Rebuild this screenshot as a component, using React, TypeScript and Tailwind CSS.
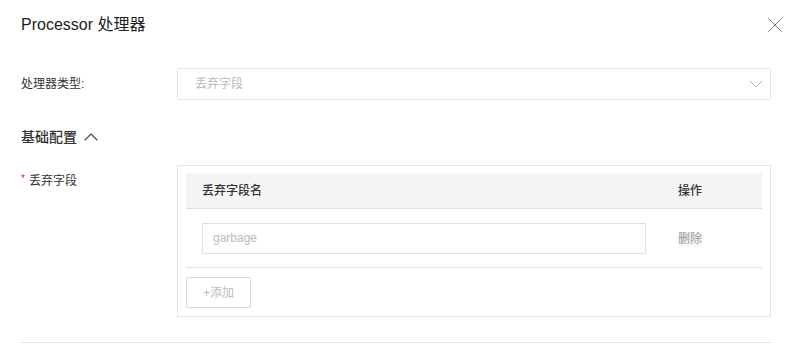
import { X, ChevronDown, ChevronUp } from 'lucide-react';

export default function App() {
  return (
    <div
      className="w-[794px] h-[358px] bg-white text-[#333] overflow-hidden"
      style={{ fontFamily: '"Liberation Sans", "Noto Sans CJK SC", sans-serif' }}
    >
      <div className="h-[50px] flex items-center justify-between pl-[21px] pr-[6px]">
        <h1 className="text-[16px] leading-[20px] text-[#222]">Processor 处理器</h1>
        <X className="w-[26px] h-[26px] text-[#777]" strokeWidth={0.9} />
      </div>

      <div className="pl-[21px] pr-[23px]">
        <div className="mt-[18px] flex items-center">
          <label className="w-[156px] text-[12px] leading-[18px]">处理器类型:</label>
          <div className="flex-1 h-[32px] border border-[#e3e3e3] rounded-[2px] flex items-center justify-between pl-[17px] pr-[2px]">
            <span className="text-[12px] text-[#bbb]">丢弃字段</span>
            <ChevronDown className="w-[24px] h-[24px] text-[#aaa]" strokeWidth={0.9} />
          </div>
        </div>

        <div className="mt-[27px] flex items-center gap-[2px] h-[20px]">
          <span className="text-[14px] font-medium text-[#333]">基础配置</span>
          <ChevronUp className="w-[24px] h-[24px] text-[#444]" strokeWidth={1.1} />
        </div>

        <div className="mt-[18px] flex">
          <div className="w-[156px] pt-[7px] text-[12px] leading-[18px] flex items-start">
            <span className="text-[#e23] mr-[4px] text-[10px] leading-[14px]">*</span>
            丢弃字段
          </div>
          <div className="flex-1 border border-[#e3e3e3] pt-[7px] px-[8px] pb-[8px]">
            <div className="flex h-[36px] items-center bg-[#f5f5f5] border-b border-[#e0e0e0] text-[12px] font-medium">
              <div className="w-[476px] pl-[16px]">丢弃字段名</div>
              <div className="flex-1 pl-[16px]">操作</div>
            </div>
            <div className="flex items-center h-[59px] border-b border-[#e3e3e3]">
              <div className="w-[476px] px-[16px]">
                <div className="h-[31px] border border-[#e0e0e0] flex items-center pl-[10px] text-[12px] text-[#bbb]">
                  garbage
                </div>
              </div>
              <div className="flex-1 pl-[16px]">
                <span className="text-[12px] text-[#999] bg-[#f7f7f7]">删除</span>
              </div>
            </div>
            <button className="mt-[9px] w-[65px] h-[31px] border border-[#d9d9d9] rounded-[2px] text-[12px] text-[#bbb]">
              +添加
            </button>
          </div>
        </div>

        <div className="mt-[25px] border-t border-[#e3e3e3]" />
      </div>
    </div>
  );
}
